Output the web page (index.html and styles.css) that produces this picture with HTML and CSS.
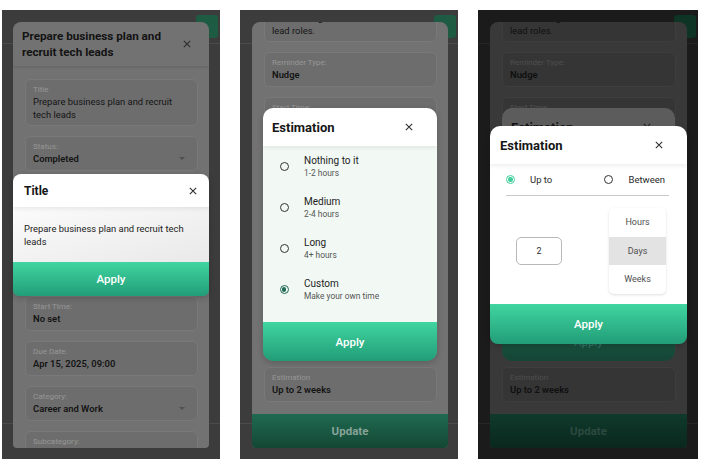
FILE: index.html
```html
<!DOCTYPE html>
<html lang="en">
<head>
<meta charset="utf-8">
<title>Task editor – estimation dialogs</title>
<link rel="stylesheet" href="styles.css">
</head>
<body>
<div class="stage">

  <!-- Phone 1: Title dialog -->
  <section class="phone dim1">
    <div class="app">
      <div class="app-bar"><span class="app-btn"></span></div>
      <div class="app-body"></div>
      <div class="app-nav"></div>
    </div>
    <div class="sheet sheet-1">
      <header class="sheet-head">
        <h2 class="sheet-title">Prepare business plan and<br>recruit tech leads</h2>
        <svg class="icon-x" viewBox="0 0 10 10" width="8" height="8"><path d="M1 1L9 9M9 1L1 9"/></svg>
      </header>
      <div class="sheet-scroll top-pad">
        <div class="field multi">
          <div class="field-label">Title</div>
          <div class="field-value">Prepare business plan and recruit<br>tech leads</div>
        </div>
        <div class="field">
          <div class="field-label">Status:</div>
          <div class="field-value strong">Completed<span class="caret"></span></div>
        </div>
        <div class="field multi">
          <div class="field-label">Description:</div>
          <div class="field-value">Draft the plan for the new venture<br>and hire engineers for the tech<br>lead roles.</div>
        </div>
        <div class="field">
          <div class="field-label">Reminder Type:</div>
          <div class="field-value strong">Nudge</div>
        </div>
        <div class="field">
          <div class="field-label">Start Time:</div>
          <div class="field-value strong">No set</div>
        </div>
        <div class="field">
          <div class="field-label">Due Date:</div>
          <div class="field-value strong">Apr 15, 2025, 09:00</div>
        </div>
        <div class="field">
          <div class="field-label">Category:</div>
          <div class="field-value strong">Career and Work<span class="caret"></span></div>
        </div>
        <div class="field">
          <div class="field-label">Subcategory:</div>
          <div class="field-value strong">Planning<span class="caret"></span></div>
        </div>
      </div>
    </div>
    <div class="modal modal-title">
      <div class="modal-head head-sm">
        <span>Title</span>
        <svg class="icon-x" viewBox="0 0 10 10" width="8" height="8"><path d="M1 1L9 9M9 1L1 9"/></svg>
      </div>
      <div class="modal-body body-text">Prepare business plan and recruit tech<br>leads</div>
      <div class="apply apply-sm">Apply</div>
    </div>
  </section>

  <!-- Phone 2: Estimation presets -->
  <section class="phone dim1">
    <div class="app">
      <div class="app-bar"><span class="app-btn"></span></div>
      <div class="app-body"></div>
      <div class="app-nav"></div>
    </div>
    <div class="sheet sheet-2">
      <div class="sheet-scroll">
        <div class="field multi scrolled">
          <div class="field-label">Description:</div>
          <div class="field-value">Draft the plan for the new venture<br>and hire engineers for the tech<br>lead roles.</div>
        </div>
        <div class="field">
          <div class="field-label">Reminder Type:</div>
          <div class="field-value strong">Nudge</div>
        </div>
        <div class="field">
          <div class="field-label">Start Time:</div>
          <div class="field-value strong">No set</div>
        </div>
        <div class="field">
          <div class="field-label">Due Date:</div>
          <div class="field-value strong">Apr 15, 2025, 09:00</div>
        </div>
        <div class="field">
          <div class="field-label">Category:</div>
          <div class="field-value strong">Career and Work<span class="caret"></span></div>
        </div>
        <div class="field">
          <div class="field-label">Subcategory:</div>
          <div class="field-value strong">Planning<span class="caret"></span></div>
        </div>
        <div class="field">
          <div class="field-label">Priority:</div>
          <div class="field-value strong">High<span class="caret"></span></div>
        </div>
        <div class="field">
          <div class="field-label">Repeat:</div>
          <div class="field-value strong">Never<span class="caret"></span></div>
        </div>
        <div class="field">
          <div class="field-label">Estimation</div>
          <div class="field-value strong">Up to 2 weeks</div>
        </div>
      </div>
      <div class="update">Update</div>
    </div>
    <div class="modal modal-est">
      <div class="modal-head head-est">
        <span>Estimation</span>
        <svg class="icon-x" viewBox="0 0 10 10" width="8" height="8"><path d="M1 1L9 9M9 1L1 9"/></svg>
      </div>
      <div class="modal-body options">
        <div class="option"><span class="radio"></span><div class="opt-text"><div class="opt-name">Nothing to it</div><div class="opt-sub">1-2 hours</div></div></div>
        <div class="option"><span class="radio"></span><div class="opt-text"><div class="opt-name">Medium</div><div class="opt-sub">2-4 hours</div></div></div>
        <div class="option"><span class="radio"></span><div class="opt-text"><div class="opt-name">Long</div><div class="opt-sub">4+ hours</div></div></div>
        <div class="option"><span class="radio on-dark"></span><div class="opt-text"><div class="opt-name">Custom</div><div class="opt-sub">Make your own time</div></div></div>
      </div>
      <div class="apply apply-est">Apply</div>
    </div>
  </section>

  <!-- Phone 3: Custom estimation -->
  <section class="phone phone-wide dim2">
    <div class="app">
      <div class="app-bar"><span class="app-btn"></span></div>
      <div class="app-body"></div>
      <div class="app-nav"></div>
    </div>
    <div class="sheet sheet-3">
      <div class="sheet-scroll">
        <div class="field multi scrolled">
          <div class="field-label">Description:</div>
          <div class="field-value">Draft the plan for the new venture<br>and hire engineers for the tech<br>lead roles.</div>
        </div>
        <div class="field">
          <div class="field-label">Reminder Type:</div>
          <div class="field-value strong">Nudge</div>
        </div>
        <div class="field">
          <div class="field-label">Start Time:</div>
          <div class="field-value strong">No set</div>
        </div>
        <div class="field">
          <div class="field-label">Due Date:</div>
          <div class="field-value strong">Apr 15, 2025, 09:00</div>
        </div>
        <div class="field">
          <div class="field-label">Category:</div>
          <div class="field-value strong">Career and Work<span class="caret"></span></div>
        </div>
        <div class="field">
          <div class="field-label">Subcategory:</div>
          <div class="field-value strong">Planning<span class="caret"></span></div>
        </div>
        <div class="field">
          <div class="field-label">Priority:</div>
          <div class="field-value strong">High<span class="caret"></span></div>
        </div>
        <div class="field">
          <div class="field-label">Repeat:</div>
          <div class="field-value strong">Never<span class="caret"></span></div>
        </div>
        <div class="field">
          <div class="field-label">Estimation</div>
          <div class="field-value strong">Up to 2 weeks</div>
        </div>
      </div>
      <div class="update">Update</div>
    </div>
    <div class="modal modal-est modal-dim">
      <div class="modal-head head-est">
        <span>Estimation</span>
        <svg class="icon-x" viewBox="0 0 10 10" width="8" height="8"><path d="M1 1L9 9M9 1L1 9"/></svg>
      </div>
      <div class="modal-body options"></div>
      <div class="apply apply-est">Apply</div>
    </div>
    <div class="modal modal-custom">
      <div class="modal-head head-custom">
        <span>Estimation</span>
        <svg class="icon-x" viewBox="0 0 10 10" width="8" height="8"><path d="M1 1L9 9M9 1L1 9"/></svg>
      </div>
      <div class="modal-body custom-body">
        <div class="mode-row">
          <div class="mode mode-first"><span class="radio on-light"></span><span class="mode-text">Up to</span></div>
          <div class="mode"><span class="radio"></span><span class="mode-text">Between</span></div>
        </div>
        <div class="amount-row">
          <div class="amount">2</div>
          <div class="picker">
            <div class="pick">Hours</div>
            <div class="pick picked">Days</div>
            <div class="pick">Weeks</div>
          </div>
        </div>
      </div>
      <div class="apply apply-custom">Apply</div>
    </div>
  </section>

</div>
</body>
</html>
```

FILE: styles.css
```css
* { box-sizing: border-box; }

body {
  margin: 0;
  background: #ffffff;
  font-family: Roboto, "Noto Sans", "Liberation Sans", sans-serif;
  color: #141414;
}

.stage {
  display: flex;
  gap: 20px;
  padding: 10px 0 0 2px;
}

/* palettes for the dimmed layers */
.dim1 {
  --frame: #3c3c3c;
  --line: #4b4b4b;
  --btn: #1e5b43;
  --sheet: #727272;
  --head-line: #686868;
  --field: #6d6d6d;
  --field-edge: #797979;
  --label: #979797;
  --value: #141414;
  --caret: #505050;
}
.dim2 {
  --frame: #1b1b1b;
  --line: #262626;
  --btn: #0e3425;
  --sheet: #393939;
  --head-line: #333333;
  --field: #353535;
  --field-edge: #3e3e3e;
  --label: #4f4f4f;
  --value: #0f0f0f;
  --caret: #262626;
}

.phone {
  position: relative;
  width: 218px;
  height: 449px;
  overflow: hidden;
  background: var(--frame);
  flex-shrink: 0;
}
.phone-wide { width: 220px; }

/* app behind the sheet */
.app {
  height: 100%;
  display: flex;
  flex-direction: column;
}
.app-bar {
  height: 34px;
  border-bottom: 1px solid var(--line);
  display: flex;
  justify-content: flex-end;
  align-items: flex-start;
  padding: 5px 2px 0 0;
}
.app-btn {
  width: 22px;
  height: 23px;
  border-radius: 3px;
  background: var(--btn);
}
.app-body { flex: 1; }
.app-nav {
  height: 36px;
  border-top: 1px solid var(--line);
}

/* bottom sheet */
.sheet {
  position: absolute;
  top: 12px;
  bottom: 11px;
  background: var(--sheet);
  border-radius: 8px 8px 4px 4px;
  display: flex;
  flex-direction: column;
  overflow: hidden;
}
.sheet-1 { left: 11px; right: 11px; }
.sheet-2 { left: 12px; right: 10px; }
.sheet-3 { left: 12px; right: 11px; }

.sheet-head {
  height: 45px;
  flex-shrink: 0;
  padding: 6px 18px 7px 9px;
  display: flex;
  justify-content: space-between;
  align-items: center;
  border-bottom: 1px solid var(--head-line);
  box-shadow: 0 1px 2px rgba(0, 0, 0, 0.08);
}
.sheet-title {
  margin: 0;
  font-size: 11.7px;
  line-height: 16px;
  font-weight: 700;
  color: #131313;
}

.icon-x {
  flex-shrink: 0;
  fill: none;
  stroke: #2b2b2b;
  stroke-width: 1.3;
}

.sheet-scroll {
  flex: 1;
  overflow: hidden;
  display: flex;
  flex-direction: column;
  gap: 10px;
  padding: 0 11px 0 12px;
}
.sheet-scroll.top-pad { padding-top: 12px; }

.field {
  flex-shrink: 0;
  background: var(--field);
  border: 1px solid var(--field-edge);
  border-radius: 6px;
  padding: 5px 8px 5px 7px;
}
.field.multi { padding-bottom: 4px; }
.field.scrolled { margin-top: -40px; }

.field-label {
  font-size: 8px;
  line-height: 10px;
  color: var(--label);
}
.field-value {
  font-size: 9.4px;
  line-height: 13px;
  color: var(--value);
  display: flex;
  justify-content: space-between;
  align-items: center;
}
.field-value.strong { font-weight: 600; }

.caret {
  width: 0;
  height: 0;
  margin-right: 4px;
  border-left: 3px solid transparent;
  border-right: 3px solid transparent;
  border-top: 3.5px solid var(--caret);
}

.update {
  height: 34px;
  flex-shrink: 0;
  display: flex;
  align-items: center;
  justify-content: center;
  font-size: 11.5px;
  font-weight: 700;
  color: #86a398;
  background: linear-gradient(#1f6a50, #144735);
}
.dim2 .update {
  color: #2c4a40;
  background: linear-gradient(#0f3a2b, #0a271e);
}

/* dialogs */
.modal {
  position: absolute;
  overflow: hidden;
  display: flex;
  flex-direction: column;
  box-shadow: 0 2px 6px rgba(0, 0, 0, 0.18);
}
.modal-head {
  flex-shrink: 0;
  position: relative;
  z-index: 1;
  display: flex;
  justify-content: space-between;
  align-items: center;
  background: #ffffff;
  font-weight: 700;
  color: #161616;
  box-shadow: 0 2px 4px rgba(0, 0, 0, 0.07);
}

.apply {
  flex-shrink: 0;
  display: flex;
  align-items: center;
  justify-content: center;
  color: #ffffff;
  font-size: 11.5px;
  font-weight: 500;
  background: linear-gradient(#40d5a1, #229d77);
}

/* phone 1 title dialog */
.modal-title {
  left: 11px;
  right: 11px;
  top: 164px;
  border-radius: 8px 8px 6px 6px;
}
.head-sm {
  height: 33px;
  padding: 0 12px 0 11px;
  font-size: 12px;
}
.body-text {
  height: 55px;
  padding: 14.5px 11px 0;
  font-size: 9.4px;
  line-height: 13px;
  color: #222222;
  background: linear-gradient(165deg, #fbfbfb, #e9e9e9);
}
.apply-sm { height: 34px; }

/* phone 2 estimation presets */
.modal-est {
  left: 23px;
  width: 174px;
  top: 98px;
  border-radius: 10px;
}
.head-est {
  height: 38px;
  padding: 0 24px 0 9px;
  font-size: 13px;
}
.options {
  height: 176px;
  background: #f2f9f4;
}
.option {
  height: 41px;
  display: flex;
  align-items: center;
  padding-left: 16.5px;
}
.opt-text { margin-left: 15.5px; }
.opt-name {
  font-size: 10px;
  line-height: 13px;
  color: #1d1d1d;
}
.opt-sub {
  font-size: 8.4px;
  line-height: 12px;
  color: #555555;
}
.apply-est { height: 39px; }

.radio {
  position: relative;
  flex-shrink: 0;
  width: 9px;
  height: 9px;
  border-radius: 50%;
  border: 1.3px solid #333333;
}
.radio.on-dark { border-color: #1f6b55; }
.radio.on-dark::after,
.radio.on-light::after {
  content: "";
  position: absolute;
  inset: 1.3px;
  border-radius: 50%;
  background: #1f6b55;
}
.radio.on-light { border-color: #42cf9d; }
.radio.on-light::after { background: #42cf9d; }

/* phone 3: dimmed preset dialog behind */
.modal-dim {
  left: 24px;
  width: 173px;
  box-shadow: none;
}
.modal-dim .modal-head {
  background: #5c5c5c;
  color: #111111;
  box-shadow: none;
}
.modal-dim .icon-x { stroke: #222222; }
.modal-dim .options { background: #5a5c5a; }
.modal-dim .apply {
  color: #2e7260;
  background: linear-gradient(#1c5c46, #154536);
}

/* phone 3: custom estimation dialog */
.modal-custom {
  left: 12px;
  width: 197px;
  top: 116px;
  border-radius: 10px 10px 8px 8px;
}
.head-custom {
  height: 38px;
  padding: 0 24px 0 10px;
  font-size: 13px;
}
.custom-body {
  height: 140px;
  background: #ffffff;
}
.mode-row {
  height: 32px;
  margin: 0 18px 0 16px;
  border-bottom: 1px solid #c9c9c9;
  display: flex;
  align-items: center;
}
.mode {
  display: flex;
  align-items: center;
}
.mode-first { width: 98px; }
.mode-text {
  font-size: 9.5px;
  color: #2a2a2a;
  margin-left: 15.5px;
}
.mode-first .mode-text { margin-left: 15px; }

.amount-row {
  display: flex;
  align-items: center;
  justify-content: space-between;
  padding: 12px 21px 10px 26px;
}
.amount {
  width: 46px;
  height: 28px;
  border: 1px solid #b8b8b8;
  border-radius: 5px;
  display: flex;
  align-items: center;
  justify-content: center;
  font-size: 9px;
  color: #333333;
}
.picker {
  width: 57px;
  border-radius: 5px;
  overflow: hidden;
  background: #ffffff;
  box-shadow: 0 1px 3px rgba(0, 0, 0, 0.13);
}
.pick {
  height: 28.5px;
  display: flex;
  align-items: center;
  justify-content: center;
  font-size: 9px;
  color: #505050;
}
.pick.picked { background: #e3e3e3; }
.apply-custom { height: 40px; }
```
